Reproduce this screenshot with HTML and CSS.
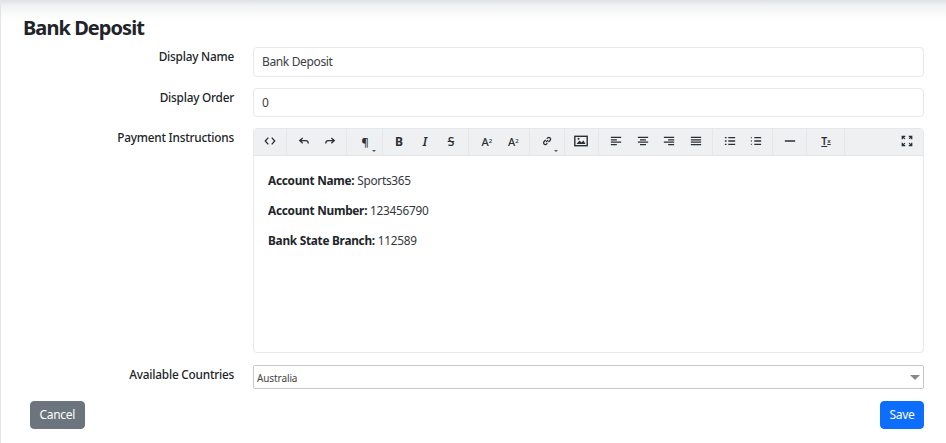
FILE: index.html
```html
<!DOCTYPE html>
<html lang="en">
<head>
<meta charset="utf-8">
<title>Bank Deposit</title>
<link rel="stylesheet" href="styles.css">
</head>
<body>
<main class="page">
  <h1 class="title">Bank Deposit</h1>
  <form class="form">
    <div class="row">
      <label class="label">Display Name</label>
      <div class="field"><div class="input">Bank Deposit</div></div>
    </div>
    <div class="row">
      <label class="label">Display Order</label>
      <div class="field"><div class="input">0</div></div>
    </div>
    <div class="row row-editor">
      <label class="label">Payment Instructions</label>
      <div class="field">
        <div class="editor">
          <div class="toolbar">
            <div class="group group-first">
              <span class="tool"><svg class="ico" viewBox="0 0 14 14"><path d="M5 3 1.500 7 5 11M9 3l3.500 4L9 11"/></svg></span>
            </div>
            <div class="group">
              <span class="tool"><svg class="ico" viewBox="0 0 14 14"><path d="M5.500 3.500 2 6.500l3.500 3M2.500 6.500H9c2 0 3 1.200 3 3.500"/></svg></span>
              <span class="tool"><svg class="ico" viewBox="0 0 14 14"><path d="M8.500 3.500l3.500 3-3.500 3M11.500 6.500H5c-2 0-3 1.200-3 3.500"/></svg></span>
            </div>
            <div class="group group-wide">
              <span class="tool tool-glyph tool-para">¶<i class="caret"></i></span>
            </div>
            <div class="group group-format">
              <span class="tool tool-glyph tool-bold">B</span>
              <span class="tool tool-glyph tool-italic">I</span>
              <span class="tool tool-glyph tool-strike">S</span>
            </div>
            <div class="group group-script">
              <span class="tool tool-glyph tool-script">A<sup class="mini">2</sup></span>
              <span class="tool tool-glyph tool-script">A<sub class="mini">2</sub></span>
            </div>
            <div class="group group-even">
              <span class="tool"><svg class="ico" viewBox="0 0 14 14"><path d="M6 8.200 8.200 6M5.500 5.800 3.400 7.900a2 2 0 0 0 2.800 2.800l1.200-1.200M6.800 4.500 8 3.300a2 2 0 0 1 2.800 2.800L8.700 8.200"/></svg><i class="caret"></i></span>
            </div>
            <div class="group group-format">
              <span class="tool"><svg class="ico ico-pic" viewBox="0 0 14 14"><rect x=".8" y="2.300" width="12.400" height="9.400" stroke-width="1.400"/><path class="solid" d="M2.500 10 5.500 6.500 7.500 8.500 9.500 6.500 11.500 10z"/><circle class="solid" cx="4.500" cy="4.800" r="1"/></svg></span>
            </div>
            <div class="group group-align">
              <span class="tool"><svg class="ico" viewBox="0 0 14 14"><path d="M1 2.800h12M1 5.600h7M1 8.400h12M1 11.200h7"/></svg></span>
              <span class="tool"><svg class="ico" viewBox="0 0 14 14"><path d="M1 2.800h12M3.500 5.600h7M1 8.400h12M3.500 11.200h7"/></svg></span>
              <span class="tool"><svg class="ico" viewBox="0 0 14 14"><path d="M1 2.800h12M6 5.600h7M1 8.400h12M6 11.200h7"/></svg></span>
              <span class="tool"><svg class="ico" viewBox="0 0 14 14"><path d="M1 2.800h12M1 5.600h12M1 8.400h12M1 11.200h12"/></svg></span>
            </div>
            <div class="group">
              <span class="tool"><svg class="ico" viewBox="0 0 14 14"><path d="M5 3h8M5 7h8M5 11h8M1 3h2M1 7h2M1 11h2"/></svg></span>
              <span class="tool"><svg class="ico" viewBox="0 0 14 14"><path d="M5 3h8M5 7h8M5 11h8"/><path class="fine" d="M1 3h2M1 7h2M1 11h2"/></svg></span>
            </div>
            <div class="group">
              <span class="tool"><svg class="ico" viewBox="0 0 14 14"><path class="rule" d="M1 7h12"/></svg></span>
            </div>
            <div class="group group-clear">
              <span class="tool tool-glyph tool-clear">T<sub class="mini">x</sub></span>
            </div>
            <div class="group group-end">
              <span class="tool"><svg class="ico" viewBox="0 0 14 14"><path d="M1.500 5V1.500H5M9 1.500h3.500V5M1.500 9v3.500H5M12.500 9v3.500H9M1.500 1.500l3 3M12.500 1.500l-3 3M1.500 12.500l3-3M12.500 12.500l-3-3"/></svg></span>
            </div>
          </div>
          <div class="content">
            <p><strong>Account Name:</strong> Sports365</p>
            <p><strong>Account Number:</strong> 123456790</p>
            <p><strong>Bank State Branch:</strong> 112589</p>
          </div>
        </div>
      </div>
    </div>
    <div class="row row-select">
      <label class="label">Available Countries</label>
      <div class="field">
        <div class="select"><span>Australia</span><i class="arrow"></i></div>
      </div>
    </div>
    <div class="actions">
      <button type="button" class="btn btn-cancel">Cancel</button>
      <button type="button" class="btn btn-save">Save</button>
    </div>
  </form>
</main>
</body>
</html>
```
FILE: styles.css
```css
* { box-sizing: border-box; }
html, body { margin: 0; padding: 0; height: 100%; }
body {
  font-family: "Noto Sans", "Open Sans", sans-serif;
  color: #212529;
  background: #fff;
  overflow: hidden;
  font-size: 11.800px;
  letter-spacing: -0.260px;
}
.page {
  height: 443px;
  padding: 15px 22px 0 22px;
  border-left: 1px solid #dfe5ec;
  background: linear-gradient(#dfe1e3 0, #f1f2f3 6px, #fcfcfc 16px, #fff 22px);
}
.title {
  margin: 0;
  height: 32px;
  font-size: 20px;
  line-height: 26px;
  font-weight: 700;
  letter-spacing: -0.950px;
}
.row { display: flex; gap: 19px; margin-bottom: 11px; }
.row-editor { margin-bottom: 12.500px; }
.row-select { margin-bottom: 12px; }
.label {
  width: 211px;
  flex: none;
  padding-top: 1px;
  text-align: right;
  line-height: 16px;
  font-weight: 500;
  letter-spacing: -0.220px;
}
.field { flex: 1; min-width: 0; }
.input {
  height: 29.500px;
  padding: 0 8px;
  border: 1px solid #e6e8eb;
  border-radius: 4px;
  background: #fff;
  line-height: 28.500px;
  font-size: 12px;
  letter-spacing: -0.360px;
  color: #3b4046;
}
.editor {
  height: 224.500px;
  border: 1px solid #e6e8eb;
  border-radius: 4px;
  overflow: hidden;
}
.toolbar {
  display: flex;
  height: 27px;
  background: #eef0f2;
  border-bottom: 1px solid #e3e5e8;
}
.group {
  display: flex;
  flex: none;
  padding: 0 3px 0 4px;
  border-right: 1px solid #e4e6e9;
}
.group-first { padding: 0 3px; }
.group-wide { padding: 0 4px 0 5px; }
.group-even { padding: 0 4px; }
.group-format { padding: 0 4px 0 3px; }
.group-script { padding: 0 2.500px 0 4.500px; }
.group-script .tool { width: 26.500px; }
.group-clear { padding: 0 5px 0 6px; }
.group-align .tool { width: 26.500px; }
.group-end { margin-left: auto; border-right: 0; padding: 0 3px 0 0; }
.tool {
  position: relative;
  display: flex;
  align-items: center;
  justify-content: center;
  width: 26px;
  height: 24px;
  font-size: 12px;
  letter-spacing: 0;
  color: #2b2f33;
}
.tool-glyph { font-weight: 600; }
.tool-bold { font-weight: 700; }
.tool-italic { font-style: italic; font-weight: 600; }
.tool-strike { text-decoration: line-through; font-weight: 500; }
.tool-para { font-size: 11px; }
.tool-script { font-size: 11px; font-weight: 500; }
.tool-clear { text-decoration: underline; font-size: 10.500px; }
.mini { font-size: 6px; line-height: 0; }
.ico {
  width: 12px;
  height: 12px;
  fill: none;
  stroke: #2b2f33;
  stroke-width: 1.500;
}
.ico-pic { width: 14px; height: 14px; }
.ico .solid { fill: #2b2f33; stroke: none; }
.ico .fine { stroke-dasharray: 1 1; }
.ico .rule { stroke-width: 2; }
.caret {
  position: absolute;
  right: 2px;
  bottom: 1px;
  width: 0;
  height: 0;
  border-left: 2px solid transparent;
  border-right: 2px solid transparent;
  border-top: 2px solid #555;
}
.content {
  padding: 16px 14px;
  line-height: 16px;
  color: #33383d;
}
.content p { margin: 0 0 14px; }
.content strong { color: #212529; font-weight: 700; }
.select {
  position: relative;
  height: 24px;
  padding: 0 3px;
  border: 1px solid #c8c8c8;
  border-radius: 2px;
  font-size: 10px;
  letter-spacing: -0.100px;
  line-height: 25px;
  color: #444;
}
.arrow {
  position: absolute;
  right: 3px;
  top: 9px;
  width: 0;
  height: 0;
  border-left: 5px solid transparent;
  border-right: 5px solid transparent;
  border-top: 5px solid #888;
}
.actions { display: flex; justify-content: space-between; padding-left: 7px; }
.btn {
  height: 28px;
  padding: 0 8.500px;
  border: 1px solid transparent;
  border-radius: 4px;
  font-family: inherit;
  font-size: 12px;
  letter-spacing: -0.300px;
  line-height: 26px;
  color: #fff;
}
.btn-cancel { background: #6c757d; border-color: #6c757d; }
.btn-save { background: #0d6efd; border-color: #0d6efd; }
```
